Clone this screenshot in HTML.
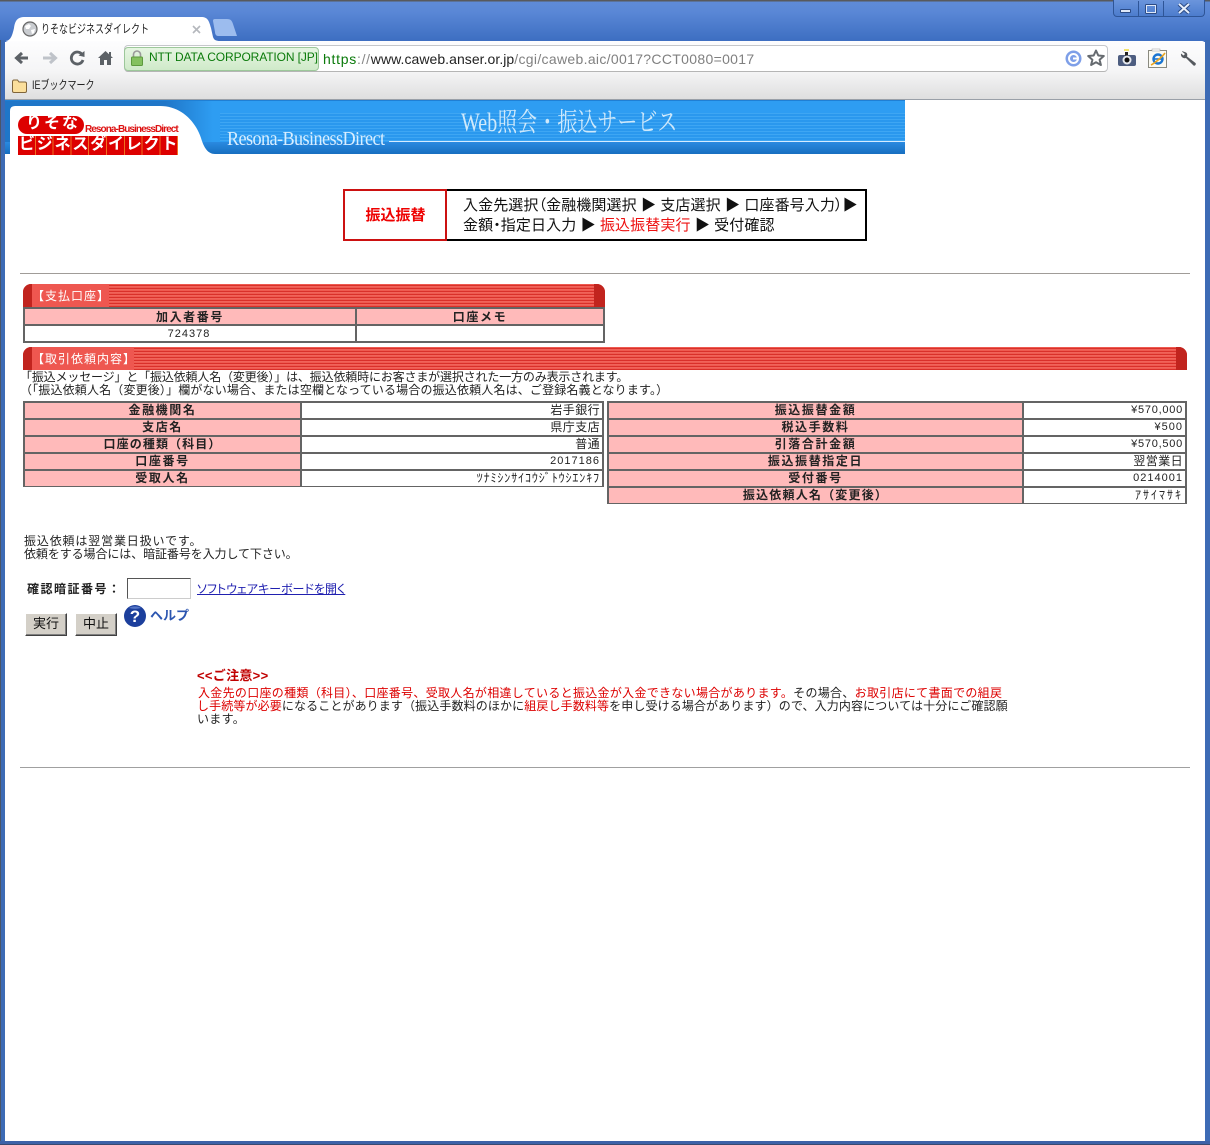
<!DOCTYPE html>
<html lang="ja"><head><meta charset="utf-8"><title>りそなビジネスダイレクト</title>
<style>
html,body{margin:0;padding:0;background:#fff}
body{width:1210px;height:1145px;position:relative;overflow:hidden;font-family:"Liberation Sans","Noto Sans CJK JP",sans-serif;font-size:12px;color:#111}
.a{position:absolute;white-space:nowrap}
.t{position:absolute;white-space:nowrap;line-height:14px;height:14px}
.g{position:absolute;background:#646464}
.c{position:absolute;box-sizing:border-box;line-height:15px;height:15px;white-space:nowrap;overflow:hidden}
.k{line-height:16px}
.h{background:#ffbaba;text-align:center;font-weight:bold;letter-spacing:1.6px;color:#222}
.v{background:#fff;text-align:right;padding-right:2px;letter-spacing:.4px;color:#222}
.n{font-size:11px;letter-spacing:1px}
.bar{position:absolute;height:23px;background:repeating-linear-gradient(180deg,#ee5a50 0 1px,#d9302a 1px 2px,#f0635a 2px 3px)}
.lab{position:absolute;left:0;top:0;height:23px;background:#ee5750;color:#fff;font-size:12px;line-height:24px;letter-spacing:1px;white-space:nowrap}
.btn{position:absolute;box-sizing:border-box;background:#d4d0c8;border:1px solid;border-color:#fff #404040 #404040 #fff;box-shadow:inset -1px -1px 0 #808080;font-size:13px;text-align:center;line-height:20px;color:#111}
.sx{transform-origin:0 50%}
</style></head><body>

<!-- window chrome -->
<div class="a" style="left:0;top:0;width:1210px;height:42px;background:linear-gradient(180deg,#58595c 0,#58595c 1px,#5f8bd7 2px,#5a87d6 12px,#3e6fc2 40px)"></div>
<div class="a" style="left:0;top:40px;width:5px;height:1105px;background:#3d6bb5;border-left:1px solid #4a5568;box-sizing:border-box"></div>
<div class="a" style="right:0;top:40px;width:5px;height:1105px;background:#3d6bb5"></div>
<div class="a" style="left:0;top:1141px;width:1210px;height:4px;background:#3d62a8;border-bottom:1px solid #3a4a70;box-sizing:border-box"></div>

<!-- window buttons -->
<div class="a" style="left:1113px;top:0;width:92px;height:17px;box-sizing:border-box;border:1px solid #2e5597;border-top:0;border-radius:0 0 4px 4px;background:linear-gradient(180deg,#6b95dc,#4c7ccd)"></div>
<div class="a" style="left:1138px;top:1px;width:1px;height:16px;background:#2e5597"></div>
<div class="a" style="left:1163px;top:1px;width:1px;height:16px;background:#2e5597"></div>
<div class="a" style="left:1120px;top:9px;width:11px;height:4px;box-sizing:border-box;background:#dfe8f8;border:1px solid #2c4b85;border-radius:1px"></div>
<div class="a" style="left:1145px;top:4px;width:12px;height:10px;box-sizing:border-box;border:2px solid #dfe8f8;outline:1px solid #2c4b85;outline-offset:-1px;border-radius:1px"></div>
<svg class="a" style="left:1177px;top:3px" width="14" height="11"><path d="M2 1 L12 10 M12 1 L2 10" stroke="#2c4b85" stroke-width="4"/><path d="M2 1 L12 10 M12 1 L2 10" stroke="#e6eefb" stroke-width="2"/></svg>

<!-- tabs -->
<svg class="a" style="left:5px;top:15px" width="234" height="27"><path d="M0 26 C5 26 7 22 9 13 C10 6 12 2 20 2 L196 2 C203 2 204 6 206 13 L208 22 C209 25 211 26 215 26 Z" fill="#fff"/><path d="M208 6 C208 4 209 4 211 4 L222 4 C226 4 227 6 228 9 L232 21 L213 21 C211 21 210 19 210 17 Z" fill="#9cbcee"/></svg>
<svg class="a" style="left:22px;top:21px" width="16" height="16" viewBox="0 0 16 16"><circle cx="8" cy="8" r="7" fill="#c9ccd0" stroke="#666" stroke-width="1.2"/><path d="M3 5 L7 3 L9 5 L7 8 L4 8 Z M9 9 L13 8 L12 12 L10 13 Z" fill="#fff"/></svg>
<div class="t sx" style="left:41px;top:22px;font-size:12px;color:#222;line-height:15px;transform:scaleX(.75)">りそなビジネスダイレクト</div>
<svg class="a" style="left:192px;top:25px" width="9" height="9"><path d="M1 1 L8 8 M8 1 L1 8" stroke="#b5b8bd" stroke-width="1.6"/></svg>

<!-- toolbar -->
<div class="a" style="left:5px;top:41px;width:1200px;height:59px;background:linear-gradient(180deg,#fdfdfe 0,#f5f5f6 30px,#dedede 59px);border-bottom:1px solid #9aa0a8;box-sizing:border-box;border-radius:3px 3px 0 0"></div>
<svg class="a" style="left:13px;top:50px" width="18" height="16" viewBox="0 0 18 16"><path d="M15 8 H4 M9 3 L3.500 8 L9 13" fill="none" stroke="#5c6166" stroke-width="3"/></svg>
<svg class="a" style="left:41px;top:50px" width="18" height="16" viewBox="0 0 18 16"><path d="M2 8 H14 M9 3 L14.500 8 L9 13" fill="none" stroke="#bfc3c9" stroke-width="3"/></svg>
<svg class="a" style="left:69px;top:50px" width="17" height="16" viewBox="0 0 17 16"><path d="M13.500 5 A6 6 0 1 0 14 10" fill="none" stroke="#5c6166" stroke-width="2.800"/><path d="M9.500 5.500 L15.500 7 L15.500 1 Z" fill="#5c6166"/></svg>
<svg class="a" style="left:97px;top:50px" width="17" height="16" viewBox="0 0 17 16"><path d="M8.500 1 L16 8 L14 8 L14 15 L10 15 L10 10 L7 10 L7 15 L3 15 L3 8 L1 8 Z" fill="#5c6166"/><rect x="12" y="2" width="2" height="4" fill="#5c6166"/></svg>

<!-- omnibox -->
<div class="a" style="left:124px;top:45px;width:984px;height:27px;box-sizing:border-box;border:1px solid #c5c7cb;border-bottom-color:#b5b5b5;border-radius:4px;background:#fff"></div>
<div class="a" style="left:124px;top:47px;width:195px;height:24px;box-sizing:border-box;border:1px solid #9cc79a;border-radius:4px;background:linear-gradient(180deg,#e6f5e2,#cfeac9)"></div>
<svg class="a" style="left:130px;top:50px" width="14" height="16" viewBox="0 0 14 16"><path d="M3.500 7 V4.500 A3.500 3.500 0 0 1 10.500 4.500 V7" fill="none" stroke="#9a9a9a" stroke-width="1.600"/><rect x="1.500" y="7" width="11" height="8.500" rx="1" fill="#84c15f" stroke="#5d9a3e"/></svg>
<div class="t" style="left:149px;top:50px;font-size:12px;color:#0a7a0a;letter-spacing:-.12px;line-height:15px">NTT DATA CORPORATION [JP]</div>
<div class="t" style="left:323px;top:51px;font-size:14px;line-height:16px;letter-spacing:.72px;color:#222"><span style="color:#0a7a0a">https</span><span style="color:#888">://</span><span style="letter-spacing:.05px">www.caweb.anser.or.jp</span><span style="color:#808080;letter-spacing:.32px">/cgi/caweb.aic/0017?CCT0080=0017</span></div>
<svg class="a" style="left:1065px;top:50px" width="17" height="17" viewBox="0 0 17 17"><circle cx="8.500" cy="8.500" r="8" fill="#7e9fe8"/><circle cx="8.500" cy="8.500" r="4.500" fill="none" stroke="#fff" stroke-width="2"/><rect x="8" y="7.500" width="5" height="2" fill="#fff"/></svg>
<svg class="a" style="left:1087px;top:49px" width="18" height="18" viewBox="0 0 18 18"><path d="M9 1.500 L11.300 6.500 L16.800 7 L12.600 10.700 L13.900 16 L9 13.200 L4.100 16 L5.400 10.700 L1.200 7 L6.700 6.500 Z" fill="#fff" stroke="#666b70" stroke-width="2" stroke-linejoin="round"/></svg>
<svg class="a" style="left:1117px;top:48px" width="20" height="20" viewBox="0 0 20 20"><path d="M7 2 H12" stroke="#f2e26b" stroke-width="2"/><rect x="1" y="7" width="18" height="11" rx="2" fill="#4d5d80"/><rect x="8" y="4" width="3" height="4" fill="#222"/><circle cx="10" cy="12" r="4.500" fill="#e5e8ee"/><circle cx="10" cy="12" r="2.500" fill="#111"/></svg>
<svg class="a" style="left:1148px;top:48px" width="20" height="21" viewBox="0 0 20 21"><rect x=".5" y="2.500" width="18" height="17" fill="#fbfaf2" stroke="#8a8a80"/><rect x="4" y="1" width="8" height="2" fill="#fff" stroke="#999" stroke-width=".5"/><circle cx="10" cy="11" r="4.500" fill="none" stroke="#1a75d2" stroke-width="2.400"/><path d="M5 11 H15" stroke="#1a75d2" stroke-width="1.600"/><path d="M3 17 C7 15 14 9 17 5" fill="none" stroke="#e9a420" stroke-width="1.600"/></svg>
<svg class="a" style="left:1180px;top:50px" width="17" height="17" viewBox="0 0 17 17"><path d="M2 1 L6 2.500 C7.500 3.500 7.500 5 7 6.500 L15.500 13 C16.500 14 15 16.500 13.500 15.500 L6 8 C4.500 8.500 2.500 8 1.500 6.500 C1 5.500 .8 4.500 1 3.500 L3.500 5.500 L5 4 L2.500 2 Z" fill="#55595e"/></svg>

<!-- bookmark bar -->
<svg class="a" style="left:12px;top:79px" width="15" height="14" viewBox="0 0 15 14"><path d="M.5 3 C.5 1.500 1 1 2 1 H5.500 L7 3 H13 C14 3 14.500 3.500 14.500 4.500 V12 C14.500 13 14 13.500 13 13.500 H2 C1 13.500 .5 13 .5 12 Z" fill="#fbdf9c" stroke="#80653a"/></svg>
<div class="t sx" style="left:32px;top:78px;font-size:12px;color:#222;line-height:15px;transform:scaleX(.75)">IEブックマーク</div>

<!-- content white -->
<div class="a" style="left:5px;top:100px;width:1200px;height:1041px;background:#fff"></div>

<!-- banner -->
<div class="a" style="left:5px;top:100px;width:900px;height:54px;background:#1f7fd4;overflow:hidden">
  <div class="a" style="left:0;top:1px;width:900px;height:41px;background:linear-gradient(90deg,#1f76c8 0,#1f76c8 160px,#2e9df2 208px)"></div>
  <div class="a" style="left:215px;top:13px;width:685px;height:28px;background:repeating-linear-gradient(180deg,#3ea6f3 0 1px,#2a98ee 1px 3px)"></div>
  <div class="a" style="left:0;top:42px;width:900px;height:12px;background:linear-gradient(180deg,#2a8ae0,#176fc0)"></div>
  <svg class="a" style="left:0;top:0" width="225" height="54" viewBox="0 0 225 54"><path d="M5 54 V11 Q5 6 10 6 H155 C175 6 190 20 196 38 C199 48 203 54 210 54 Z" fill="#fff"/></svg>
  <div class="a" style="left:384px;top:41px;width:516px;height:1px;background:#d4ecff"></div>
  <div class="t sx" style="left:222px;top:27px;height:24px;line-height:24px;font-family:'Liberation Serif','Noto Serif CJK SC',serif;font-size:20px;letter-spacing:-.65px;color:#d8eeff;transform:scaleX(.91)">Resona-BusinessDirect</div>
  <div class="t sx" style="left:456px;top:7px;height:32px;line-height:32px;font-family:'Liberation Serif','Noto Serif CJK SC',serif;font-size:26px;letter-spacing:.1px;color:#cfe9fb;transform:scaleX(.767)">Web照会・振込サービス</div>
</div>
<!-- logo -->
<div class="a" style="left:18px;top:116px;width:66px;height:18px;border-radius:9px;background:#dd0000"></div>
<div class="t" style="left:26px;top:115px;width:56px;height:18px;line-height:18px;font-size:16px;font-weight:bold;color:#fff;letter-spacing:2px">りそな</div>
<div class="t" style="left:85px;top:124px;font-size:10px;line-height:12px;font-weight:bold;color:#dd1111;letter-spacing:-.93px">Resona-BusinessDirect</div>
<div class="a" style="left:18px;top:136px;width:160px;height:19px;background:repeating-linear-gradient(90deg,#dd0000 0 16.800px,#f07020 16.800px 17.800px)"></div>
<div class="t" style="left:19px;top:136px;height:19px;line-height:18px;font-size:16px;font-weight:bold;color:#fff;letter-spacing:1.800px">ビジネスダイレクト</div>

<!-- steps box -->
<div class="a" style="left:343px;top:189px;width:524px;height:52px;box-sizing:border-box;border:2px solid #000"></div>
<div class="a" style="left:343px;top:189px;width:104px;height:52px;box-sizing:border-box;border:2px solid #cc1111;background:#fff;color:#ee0000;font-weight:bold;font-size:15px;text-align:center;line-height:50px;padding-left:1px">振込振替</div>
<div class="t" style="left:463px;top:197px;font-size:15px;height:18px;line-height:18px;font-feature-settings:'palt';letter-spacing:.1px;color:#111">入金先選択（金融機関選択 ▶ 支店選択 ▶ 口座番号入力）▶</div>
<div class="t" style="left:463px;top:217px;font-size:15px;height:18px;line-height:18px;font-feature-settings:'palt';letter-spacing:.1px;color:#111">金額・指定日入力 ▶ <span style="color:#ee1111">振込振替実行</span> ▶ 受付確認</div>

<div class="a" style="left:20px;top:273px;width:1170px;height:1px;background:#a09c98"></div>
<div class="a" style="left:20px;top:767px;width:1170px;height:1px;background:#a0a0a0"></div>

<!-- section 1 header -->
<div class="bar" style="left:23px;top:284px;width:582px;border-radius:8px 8px 0 0;overflow:hidden">
  <div class="a" style="left:0;top:0;width:9px;height:23px;background:#c1241e"></div>
  <div class="a" style="right:0;top:0;width:11px;height:23px;background:#c1241e"></div>
  <div class="lab" style="left:9px;width:77px">【支払口座】</div>
</div>
<!-- section 1 table -->
<div class="g" style="left:23px;top:307px;width:582px;height:36px"></div>
<div class="c h k" style="left:25px;top:309px;width:330px">加入者番号</div>
<div class="c h k" style="left:357px;top:309px;width:246px">口座メモ</div>
<div class="c v n k" style="left:25px;top:326px;width:330px;text-align:center">724378</div>
<div class="c v" style="left:357px;top:326px;width:246px"></div>

<!-- section 2 header -->
<div class="bar" style="left:23px;top:347px;width:1164px;border-radius:8px 8px 0 0;overflow:hidden">
  <div class="a" style="left:0;top:0;width:9px;height:23px;background:#c1241e"></div>
  <div class="a" style="right:0;top:0;width:11px;height:23px;background:#c1241e"></div>
  <div class="lab" style="left:9px;width:102px">【取引依頼内容】</div>
</div>
<div class="t" style="left:20px;top:371px;letter-spacing:-.16px;line-height:13px;height:13px;color:#222">「振込メッセージ」と「振込依頼人名（変更後）」は、振込依頼時にお客さまが選択された一方のみ表示されます。</div>
<div class="t" style="left:20px;top:384px;letter-spacing:.16px;line-height:13px;height:13px;color:#222">（「振込依頼人名（変更後）」欄がない場合、または空欄となっている場合の振込依頼人名は、ご登録名義となります。）</div>

<!-- left table -->
<div class="g" style="left:23px;top:401px;width:581px;height:86px"></div>
<div class="c h" style="left:25px;top:403px;width:275px">金融機関名</div><div class="c v" style="left:302px;top:403px;width:300px">岩手銀行</div>
<div class="c h" style="left:25px;top:420px;width:275px">支店名</div><div class="c v" style="left:302px;top:420px;width:300px">県庁支店</div>
<div class="c h" style="left:25px;top:437px;width:275px;letter-spacing:1.1px">口座の種類（科目）</div><div class="c v" style="left:302px;top:437px;width:300px">普通</div>
<div class="c h" style="left:25px;top:454px;width:275px">口座番号</div><div class="c v n" style="left:302px;top:454px;width:300px">2017186</div>
<div class="c h" style="left:25px;top:471px;width:275px">受取人名</div><div class="c v" style="left:302px;top:471px;width:300px;letter-spacing:.9px">ﾂﾅﾐｼﾝｻｲｺｳｼﾞﾄｳｼｴﾝｷﾌ</div>

<!-- right table -->
<div class="g" style="left:607px;top:401px;width:580px;height:103px"></div>
<div class="c h" style="left:609px;top:403px;width:413px">振込振替金額</div><div class="c v n" style="left:1024px;top:403px;width:161px;letter-spacing:.75px">¥570,000</div>
<div class="c h" style="left:609px;top:420px;width:413px">税込手数料</div><div class="c v n" style="left:1024px;top:420px;width:161px">¥500</div>
<div class="c h" style="left:609px;top:437px;width:413px">引落合計金額</div><div class="c v n" style="left:1024px;top:437px;width:161px;letter-spacing:.75px">¥570,500</div>
<div class="c h" style="left:609px;top:454px;width:413px">振込振替指定日</div><div class="c v" style="left:1024px;top:454px;width:161px">翌営業日</div>
<div class="c h" style="left:609px;top:471px;width:413px">受付番号</div><div class="c v n" style="left:1024px;top:471px;width:161px">0214001</div>
<div class="c h" style="left:609px;top:488px;width:413px;letter-spacing:1.2px">振込依頼人名（変更後）</div><div class="c v" style="left:1024px;top:488px;width:161px;letter-spacing:2px">ｱｻｲﾏｻｷ</div>

<!-- message -->
<div class="t" style="left:24px;top:535px;letter-spacing:.85px;line-height:13px;height:13px;color:#222">振込依頼は翌営業日扱いです。</div>
<div class="t" style="left:24px;top:548px;letter-spacing:-.09px;line-height:13px;height:13px;color:#222">依頼をする場合には、暗証番号を入力して下さい。</div>
<div class="t" style="left:27px;top:582px;font-weight:bold;letter-spacing:1.500px;color:#222">確認暗証番号：</div>
<div class="a" style="left:127px;top:578px;width:64px;height:21px;box-sizing:border-box;border:1px solid;border-color:#555 #ccc #ccc #555;background:#fff"></div>
<div class="t" style="left:197px;top:582px;color:#2020b0;text-decoration:underline;font-feature-settings:'palt'">ソフトウェアキーボードを開く</div>
<div class="btn" style="left:25px;top:613px;width:42px;height:23px">実行</div>
<div class="btn" style="left:75px;top:613px;width:42px;height:23px">中止</div>
<svg class="a" style="left:123px;top:604px" width="24" height="24" viewBox="0 0 24 24"><circle cx="12" cy="12" r="11" fill="#1c3f9c"/><path d="M6 4 A10 8 0 0 1 18 4 A12 6 0 0 1 6 4Z" fill="#6f8fd8" opacity=".7"/><text x="12" y="18" text-anchor="middle" font-family="Liberation Sans" font-weight="bold" font-size="17" fill="#fff">?</text></svg>
<div class="t" style="left:150px;top:609px;font-weight:bold;font-size:13px;color:#2b55b0">ヘルプ</div>

<!-- notice -->
<div class="t" style="left:197px;top:669px;font-weight:bold;font-size:13px;color:#c00000;letter-spacing:.3px">&lt;&lt;ご注意&gt;&gt;</div>
<div class="t" style="left:198px;top:687px;letter-spacing:.3px;line-height:13px;height:13px;color:#222"><span style="color:#dd0000">入金先の口座の種類（科目）、口座番号、受取人名が相違していると振込金が入金できない場合があります。</span>その場合、<span style="color:#dd0000">お取引店にて書面での組戻</span></div>
<div class="t" style="left:197px;top:700px;letter-spacing:.12px;line-height:13px;height:13px;color:#222"><span style="color:#dd0000">し手続等が必要</span>になることがあります（振込手数料のほかに<span style="color:#dd0000">組戻し手数料等</span>を申し受ける場合があります）ので、入力内容については十分にご確認願</div>
<div class="t" style="left:197px;top:713px;letter-spacing:.3px;line-height:13px;height:13px;color:#222">います。</div>

</body></html>
